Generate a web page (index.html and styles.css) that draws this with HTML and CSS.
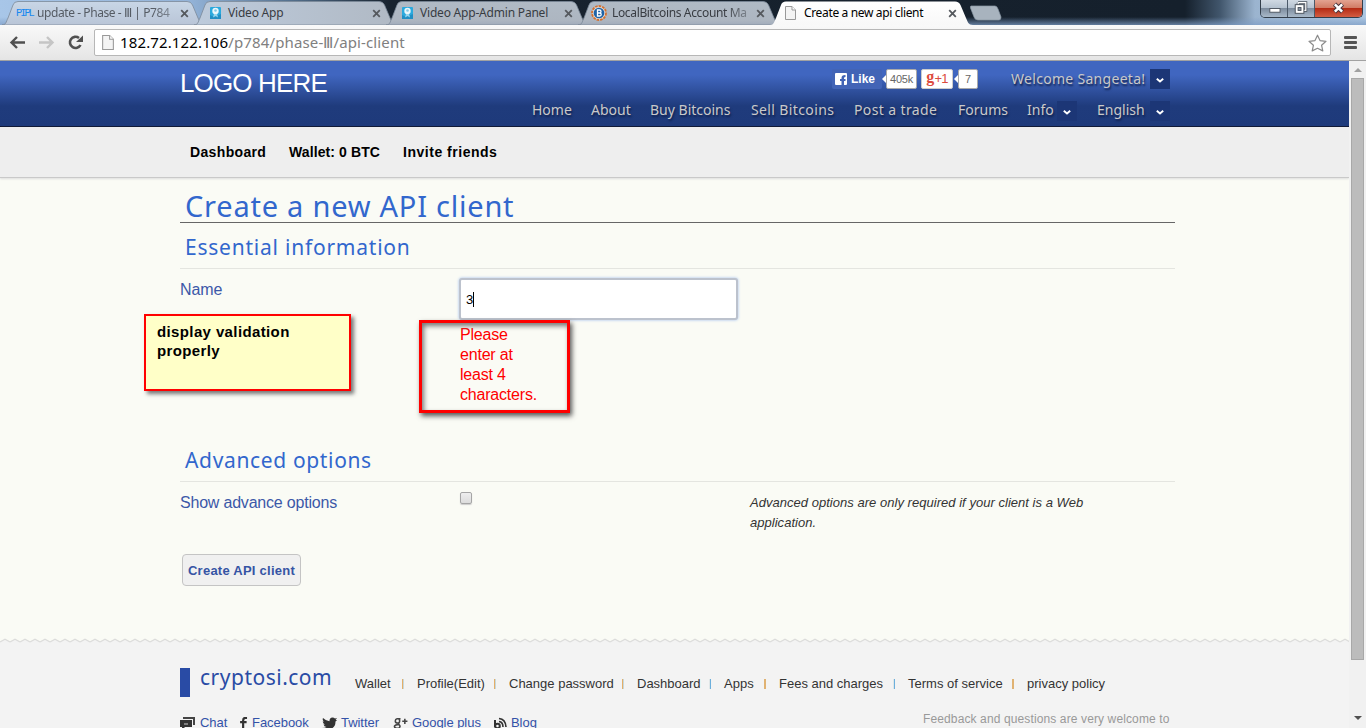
FILE: index.html
```html
<!DOCTYPE html>
<html lang="en">
<head>
<meta charset="utf-8">
<title>Create a new api client</title>
<link rel="stylesheet" href="styles.css">
</head>
<body>
<svg class="defs" width="0" height="0" aria-hidden="true">
  <defs>
    <linearGradient id="tabFill" x1="0" y1="0" x2="0" y2="1"><stop offset="0" stop-color="#b0bac5"/><stop offset=".8" stop-color="#adb6c1"/><stop offset="1" stop-color="#a1acbb"/></linearGradient>
    <linearGradient id="tabLight" x1="0" y1="0" x2="0" y2="1"><stop offset="0" stop-color="#c8d6e6"/><stop offset="1" stop-color="#b9c5d7"/></linearGradient>
    <linearGradient id="tabMix" x1="0" y1="0" x2="1" y2="0"><stop offset="0" stop-color="#bdcbdc"/><stop offset="1" stop-color="#b0b9c4"/></linearGradient>
    <linearGradient id="tabActive" x1="0" y1="0" x2="0" y2="1"><stop offset="0" stop-color="#fff"/><stop offset="1" stop-color="#f8f8f8"/></linearGradient>
    <symbol id="tabShape" viewBox="0 0 203 24"><path d="M0 24C4 24 4 21 6 17L11 4Q12 .5 16 .5H185Q189 .5 190.500 4L196 17C198 21 198 24 203 24Z"/></symbol>
    <symbol id="close" viewBox="0 0 9 9"><path d="M1.200 1.200 7.800 7.800M7.800 1.200 1.200 7.800" fill="none" stroke="#55595e" stroke-width="1.800"/></symbol>
    <symbol id="page" viewBox="0 0 11 14"><path d="M.5.5H7L10.500 4V13.500H.5Z" fill="#f4f4f4" stroke="#999"/><path d="M7 .5V4H10.500" fill="#fff" stroke="#999"/></symbol>
    <symbol id="video" viewBox="0 0 11 14"><rect y="1" width="11" height="12" rx="1" fill="#2ba9dd"/><path d="M0 9 4 11 11 8V13H0Z" fill="#218fc4"/><circle cx="5.500" cy="5" r="3.200" fill="#e9f7fc"/><circle cx="5.500" cy="4.500" r="1.300" fill="#84c8e4"/><path d="M4 8H7L8 11.500 5.500 10 3 11.500Z" fill="#9bd6ed"/></symbol>
    <symbol id="chev" viewBox="0 0 8 5"><path d="M.8.8 4 3.500 7.200.8" fill="none" stroke="#fff" stroke-width="1.900"/></symbol>
    <pattern id="zig" width="10" height="6" patternUnits="userSpaceOnUse"><path d="M0 4 5 1 10 4V6H0Z" fill="#f3f3f3"/><path d="M0 4 5 1.200 10 4" fill="none" stroke="#dcdcdb" stroke-width="1.200"/></pattern>
  </defs>
</svg>
<div class="browser">
  <div class="tabstrip">
    <div class="tab"><svg class="shape light"><use href="#tabShape"/></svg><span class="fav pipl">PIPL</span><span class="title t1">update - Phase - Ⅲ | P784</span><svg class="x"><use href="#close"/></svg></div>
    <div class="tab"><svg class="shape mix"><use href="#tabShape"/></svg><svg class="fav ico vid"><use href="#video"/></svg><span class="title t2">Video App</span><svg class="x"><use href="#close"/></svg></div>
    <div class="tab"><svg class="shape"><use href="#tabShape"/></svg><svg class="fav ico vid"><use href="#video"/></svg><span class="title t3">Video App-Admin Panel</span><svg class="x"><use href="#close"/></svg></div>
    <div class="tab"><svg class="shape"><use href="#tabShape"/></svg><svg class="fav coin" viewBox="0 0 16 16"><circle cx="8" cy="8" r="7" fill="#e0d7cf" stroke="#d4702f" stroke-width="1.800" stroke-dasharray="2.600 1"/><circle cx="8" cy="8" r="5.300" fill="#1f64a8"/><path d="M6.500 5H8.500Q10 5 10 6.500T8.500 8H6.500ZM6.500 8H8.800Q10.200 8 10.200 9.500T8.800 11H6.500Z" fill="none" stroke="#fff" stroke-width="1.300"/></svg><span class="title t4">LocalBitcoins Account Ma</span><svg class="x"><use href="#close"/></svg></div>
    <div class="tab current"><svg class="shape active"><use href="#tabShape"/></svg><svg class="fav ico"><use href="#page"/></svg><span class="title t5">Create a new api client</span><svg class="x"><use href="#close"/></svg></div>
    <svg class="newtab" viewBox="0 0 32 16"><path d="M1 1H25Q27 1 28 4L31 12Q31 15 29 15H8Q5 15 4 12L.5 3Q0 1 1 1Z" fill="#a8b3be" stroke="#8998a5" stroke-width=".7"/></svg>
    <div class="winbtns">
      <span class="wb"><svg viewBox="0 0 28 17"><rect x="9.500" y="8.500" width="11" height="4" fill="#fff" stroke="#4b535e"/></svg></span>
      <span class="wb"><svg viewBox="0 0 27 17"><path d="M10.500 2.500H18.500V10.500H16M10.500 2.500V5" fill="none" stroke="#4b535e" stroke-width="3"/><path d="M10.500 2.500H18.500V10.500H16M10.500 2.500V5" fill="none" stroke="#fff" stroke-width="1.300"/><rect x="7.500" y="4.500" width="9" height="9" fill="#fff" stroke="#4b535e"/><rect x="10.500" y="7.500" width="3" height="3" fill="#8996a6" stroke="#4b535e"/></svg></span>
      <span class="wb red"><svg viewBox="0 0 48 17"><path d="M20 4 28 12M28 4 20 12" stroke="#4c3840" stroke-width="4.600"/><path d="M20.300 4.300 27.700 11.700M27.700 4.300 20.300 11.700" stroke="#fff" stroke-width="2.600"/></svg></span>
    </div>
  </div>
  <div class="toolbar">
    <svg class="tools" viewBox="0 0 84 20" fill="none">
      <path d="M25 9.500H11M17 4 11.500 9.500 17 15" stroke="#505050" stroke-width="2.400"/>
      <path d="M39 9.500H52M47 4 52.500 9.500 47 15" stroke="#c5c5c5" stroke-width="2.400"/>
      <path d="M80.500 12A5.600 5.600 0 1 1 79 5" stroke="#505050" stroke-width="2.600"/><path d="M83 2.500V9H76Z" fill="#505050"/>
    </svg>
    <div class="omnibox">
      <svg class="pg"><use href="#page"/></svg>
      <span class="url"><b>182.72.122.106</b>/p784/phase-Ⅲ/api-client</span>
      <svg class="star" viewBox="0 0 19 18"><path d="M9.500 1.200 12 6.600 18 7.300 13.600 11.300 14.800 16.900 9.500 14.300 4.200 16.900 5.400 11.300 1 7.300 7 6.600Z" fill="#fff" stroke="#8b8b8b" stroke-width="1.200" stroke-linejoin="round"/></svg>
    </div>
    <div class="burger"><i></i><i></i><i></i></div>
  </div>
</div>
<div class="viewport">
  <div class="site">
    <header class="head">
      <div class="wrap headgrid">
        <div class="logo">LOGO HERE</div>
        <div class="social">
          <span class="like"><svg viewBox="0 0 12 12"><path d="M0 1Q0 0 1 0H11Q12 0 12 1V11Q12 12 11 12H9V8H10.500V6H9V5Q9 4 10.500 4V2Q6.500 1.800 6.500 5V6H5V8H6.500V12H1Q0 12 0 11Z" fill="#fff"/></svg>Like</span>
          <span class="bubble b1">405k</span>
          <span class="plus"><b>g</b><span>+1</span></span>
          <span class="bubble b2">7</span>
          <span class="welcome">Welcome Sangeeta!</span>
          <span class="drop"><svg><use href="#chev"/></svg></span>
        </div>
        <nav class="nav">
          <span>Home</span><span>About</span><span>Buy Bitcoins</span><span class="wide">Sell Bitcoins</span><span class="wide">Post a trade</span><span>Forums</span>
          <span class="dd"><span>Info</span><i class="drop"><svg><use href="#chev"/></svg></i></span><span class="dd"><span>English</span><i class="drop"><svg><use href="#chev"/></svg></i></span>
        </nav>
      </div>
    </header>
    <div class="sub"><div class="wrap subnav"><span class="s1">Dashboard</span><span class="s2">Wallet: 0 BTC</span><span class="s3">Invite friends</span></div></div>
    <main class="wrap main">
      <h1>Create a new API client</h1>
      <h2>Essential information</h2>
      <div class="row name">
        <span class="lab l1">Name</span>
        <div><div class="input">3<i></i></div><p class="err">Please<br>enter at<br>least 4<br>characters.</p></div>
      </div>
      <h2 class="adv">Advanced options</h2>
      <div class="row opt">
        <span class="lab l2">Show advance options</span><span class="check"></span>
        <p class="hint"><span>Advanced options are only required if your client is a Web</span><br>application.</p>
      </div>
      <div class="btn">Create API client</div>
      <div class="note"><span>display validation</span><br>properly</div>
      <div class="mark"></div>
    </main>
    <svg class="zigzag" width="1349" height="6"><rect width="1349" height="6" fill="url(#zig)"/></svg>
    <footer class="foot">
      <div class="wrap">
        <div class="f1">
          <span class="brand">cryptosi.com</span>
          <div class="links"><span>Wallet</span><span>Profile(Edit)</span><span>Change password</span><span>Dashboard</span><span class="blue">Apps</span><span>Fees and charges</span><span class="blue">Terms of service</span><span class="last">privacy policy</span></div>
        </div>
        <div class="f2">
          <span class="soc"><svg viewBox="0 0 15 13"><path d="M3 0H15V8H13V2H3Z" fill="#444"/><path d="M0 3H12V10H5L2 13V10H0Z" fill="#333"/><path d="M4 7H8" stroke="#ccc"/></svg>Chat</span>
          <span class="soc"><svg viewBox="0 0 9 15"><path d="M8 1H6Q3.500 1 3.500 4V14M0 6H7.500" fill="none" stroke="#333" stroke-width="2.500"/></svg>Facebook</span>
          <span class="soc"><svg viewBox="0 0 15 13"><path d="M1 1Q4 4 7.500 4.200Q7.300.8 10.500.5Q12 .5 13 1.500L15 1 13.600 3 15 3Q14 4 13.500 4.500Q13.500 12 5.500 12.500Q2 12.500 0 11Q3 11 4.500 10Q2 9.500 1.500 7.500H3Q.8 6.500.7 4.300L2 4.700Q0 3 1 1Z" fill="#333"/></svg>Twitter</span>
          <span class="soc"><svg viewBox="0 0 16 15" fill="none" stroke="#444" stroke-width="1.800"><path d="M8 2H4Q2 2.300 2 4.500T4.500 7T7 4.500T5 2M5 7 6.500 9Q8 10.500 7 12T3.500 13T1 11T4 9H6M10 5H16M13 2V8"/></svg>Google plus</span>
          <span class="soc"><svg viewBox="0 0 13 13" fill="none" stroke="#333"><path d="M1 3V10" stroke-width="2"/><circle cx="3.500" cy="9" r="2.300" stroke-width="2"/><path d="M5 4.500Q9 5 9 10M5 1.500Q11.500 2 12 10" stroke-width="1.600"/></svg>Blog</span>
          <span class="feedback">Feedback and questions are very welcome to</span>
        </div>
      </div>
    </footer>
  </div>
  <div class="scroll"><i class="up"></i><div class="thumb"></div><i class="down"></i></div>
</div>
</body>
</html>
```
FILE: styles.css
```css
*{box-sizing:border-box}
body{margin:0;width:1366px;height:728px;overflow:hidden;font-family:"Liberation Sans",sans-serif;background:#fafbf5;white-space:nowrap}
svg{display:block}
.defs{position:absolute}
h1,h2,p{margin:0;font-weight:400}
i{font-style:normal}
.tabstrip{height:25px;display:flex;position:relative;padding:1px 0 0 2px;background:linear-gradient(transparent 17px,rgba(126,157,197,.75) 25px),linear-gradient(90deg,#a8c6e8 0,#93b3d8 190px,#54708d 290px,#18232f 390px,#15202c 1185px,#41566c 1220px,#9bb4cf 1255px,#adc7e2)}
.tab{position:relative;width:203px;margin-right:-11px;height:24px;display:flex;align-items:center;padding-left:15px;flex:none}
.current{z-index:1}
.shape{position:absolute;inset:0;width:203px;height:24px;fill:url(#tabFill);stroke:#7b8998;stroke-width:.8}
.light{fill:url(#tabLight)}.mix{fill:url(#tabMix)}.active{fill:url(#tabActive);stroke:none}
.fav{position:relative;width:20px;flex:none}
.ico{width:11px;height:14px;margin-right:7px}
.vid{margin-left:1px;margin-right:6px}
.coin{width:16px;height:16px;margin:0 4px 0 -2px}
.pipl{font:10.500px/14px "Liberation Mono",monospace;color:#1688ef;margin-left:-1px;letter-spacing:-2.100px}
.title{position:relative;font:12px/18px "Noto Sans",sans-serif;color:#383c42;width:140px;margin-left:1px}
.t1{color:#555b64;letter-spacing:-.42px;-webkit-mask-image:linear-gradient(90deg,#000 115px,rgba(0,0,0,.5) 138px);mask-image:linear-gradient(90deg,#000 115px,rgba(0,0,0,.5) 138px)}
.t2,.t3{letter-spacing:-.2px}
.t4{letter-spacing:-.35px;-webkit-mask-image:linear-gradient(90deg,#000 112px,rgba(0,0,0,.25) 142px);mask-image:linear-gradient(90deg,#000 112px,rgba(0,0,0,.25) 142px)}
.t5{color:#000;letter-spacing:-.35px}
.x{position:absolute;left:178px;top:8px;width:9px;height:9px}
.newtab{width:32px;height:16px;margin:4px 0 0 8px}
.winbtns{display:flex;margin-left:auto;margin-right:3px;width:103px;height:18px;border:1px solid #333e4b;border-top:0;border-radius:0 0 5px 5px;overflow:hidden;margin-top:-1px}
.wb{width:27px;background:linear-gradient(#d0d9e3 0,#b4c1cf 48%,#7d8c9e 50%,#a9b9c9);border-right:1px solid #4b5969}
.wb svg{width:100%;height:17px}
.red{width:47px;border:0;background:linear-gradient(#e3a391 0,#d07a63 48%,#b52c15 50%,#d35d42)}
.toolbar{height:36px;display:flex;padding-top:4px;background:linear-gradient(#f9f9f9,#e5e5e5);border-bottom:1px solid #a2a2a2}
.tools{width:84px;height:20px;margin:4px 10px 0 0}
.omnibox{width:1237px;height:27px;border:1px solid #b7b7b7;border-radius:2px;background:#fff;display:flex;align-items:center;padding-left:7px}
.pg{width:12px;height:15px}
.url{font:15px/22px "Noto Sans",sans-serif;color:#808080;margin:-2px 0 0 6px;letter-spacing:.13px}
.url b{font-weight:400;color:#000}
.star{width:19px;height:18px;margin-left:auto;margin-right:3px}
.burger{margin:7px 0 0 13px;width:13px;display:grid;gap:2px;align-content:start}
.burger i{height:3px;background:#555;border-radius:1px}
.viewport{display:flex;height:667px}
.site{width:1349px;overflow:hidden;height:667px}
.wrap{width:995px;margin-left:180px}
.head{height:66px;background:linear-gradient(#4066c0 0,#4066c0 14px,#1f3b7c 45px,#1e3a7b);border-bottom:1px solid #020b2b}
.headgrid{display:grid;grid-template-columns:352px 638px;grid-template-rows:35px 30px}
.logo{grid-row:1/3;color:#fff;font-size:26px;line-height:30px;padding-top:7px;letter-spacing:-.85px}
.social{display:flex;padding:8px 0 0 300px;height:35px}
.like{width:50px;height:20px;display:flex;align-items:center;font:bold 12px/20px "Liberation Sans",sans-serif;color:#fff;background:#4264b6;padding-left:3px;border-radius:2px}
.like svg{width:12px;height:12px;margin-right:4px}
.bubble{position:relative;height:20px;background:#fff;border:1px solid #aaa;border-radius:2px;color:#666;font-size:11px;line-height:18px;text-align:center}
.bubble:before{content:"";position:absolute;left:-5px;top:5px;border:4px solid transparent;border-right-color:#fff;border-left:0}
.b1{width:31px;margin-left:4px;letter-spacing:-.2px}.b2{width:20px;margin-left:5px}
.plus{width:32px;height:20px;margin-left:4px;background:#fff;border:1px solid #ccc;border-radius:2px;color:#dc4b3e;font:13px/17px "Liberation Sans",sans-serif;display:flex;justify-content:center;letter-spacing:-.8px}
.plus b{font:bold 16px/14px "Liberation Serif",serif;margin-right:1px}
.welcome,.nav{font:14px/20px "Noto Sans",sans-serif;color:#c9c9c9;text-shadow:1px 2px 2px #10204c}
.welcome{margin-left:33px;width:139px;letter-spacing:.3px}
.drop{width:20px;height:20px;background:#1c3676;display:flex;align-items:center;justify-content:center;flex:none}
.drop svg{width:8px;height:5px;margin-top:2px}
.nav{display:grid;grid-template-columns:39px 39px 81px 83px 84px 49px 50px 73px;column-gap:20px;padding-top:4px}
.nav .wide{letter-spacing:.38px}
.dd{display:flex;justify-content:space-between}
.dd .drop{margin-top:1px}
.sub{height:51px;background:#eee;border-bottom:1px solid #c9c9c9;box-shadow:0 1px 2px #ddd}
.subnav{display:grid;grid-template-columns:99px 114px 100px;padding:15px 0 0 10px;font:bold 14px/20px "Liberation Sans",sans-serif}
.s1{letter-spacing:.35px}.s2{letter-spacing:.1px}.s3{letter-spacing:.52px}
.main{position:relative;height:460px;padding-top:12px;font-size:16px}
h1,h2,.brand{font-family:"Noto Sans",sans-serif;color:#3267cd}
h1{font-size:29px;line-height:31px;height:33px;padding-left:5px;border-bottom:1px solid #666;letter-spacing:.77px}
h2{font-size:21px;line-height:28px;height:46px;padding:10px 0 0 5px;border-bottom:1px solid #e4e5e0;letter-spacing:.77px}
.adv{letter-spacing:.65px}
.row{display:grid;grid-template-columns:280px 290px 1fr;color:#3c58a8}
.name{height:167px;padding-top:9px}
.lab{line-height:24px;letter-spacing:-.2px}
.l1{letter-spacing:-.1px}
.input{width:279px;height:42px;margin-left:-1px;border:2px solid #bcc2cd;border-radius:3px;background:#fff;box-shadow:0 0 3px #9dbbee;display:flex;align-items:center;padding-left:5px;font-size:13px;color:#000}
.input i{width:1px;height:15px;background:#000}
.err{color:#f00;line-height:20px;padding-top:5px;letter-spacing:-.2px}
.opt{height:72px;padding-top:9px}
.check{width:12px;height:12px;margin-top:1px;border:1px solid #a5a5a5;border-radius:2px;background:linear-gradient(#eee,#dcdcdc);box-shadow:0 1px 1px #ccc}
.hint{font:italic 13px/20px "Liberation Sans",sans-serif;color:#333;padding-top:2px;letter-spacing:.03px}
.btn{margin:0 0 0 2px;width:119px;height:32px;border:1px solid #c4c4c4;border-radius:4px;background:#f0f0f0;font:bold 13px/31px "Liberation Sans",sans-serif;color:#3654a4;text-align:center;letter-spacing:.25px}
.note{position:absolute;left:-36px;top:136px;width:207px;height:77px;border:2px solid #f00;background:#ffffc8;box-shadow:3px 3px 4px #777;padding:6px 11px;font:bold 15px/19px "Liberation Sans",sans-serif;letter-spacing:.38px}
.mark{position:absolute;left:239px;top:142px;width:151px;height:93px;border:3px solid #f00;box-shadow:2px 3px 5px #555,inset 2px 3px 5px #777}
.zigzag{height:6px}
.foot{height:84px;background:#f3f3f3;padding-top:24px}
.f1{display:flex;height:29px;border-left:10px solid #294ba5}
.brand{font-size:21px;line-height:19px;color:#294ba5;padding-left:10px;width:165px;letter-spacing:.5px}
.links{display:grid;grid-template-columns:62px 92px 128px 87px 55px 129px 119px 78px;font-size:13px;color:#333;padding-top:6px;line-height:20px}
.links span{display:flex;justify-content:space-between;padding-right:13px}
.links span:after{content:"";width:2px;height:10px;background:linear-gradient(90deg,#e4ae68 60%,#c6d8dc 60%);margin-top:5px}
.links .blue:after{background:#e0b272}
.links span:nth-child(4):after,.links span:nth-child(6):after{background:linear-gradient(90deg,#dfe6e7 40%,#6cafdc 40%)}
.links .last{padding:0}.links .last:after{display:none}
.f2{display:grid;grid-template-columns:60px 82px 71px 101px 429px 247px;font-size:13px;line-height:20px;color:#3352a8;padding-top:16px;letter-spacing:-.05px}
.soc{display:flex}
.soc svg{height:13px;width:15px;margin:4px 5px 0 0}
.soc:nth-child(2) svg{width:8px;margin-right:4px}
.soc:nth-child(3) svg,.soc:nth-child(4) svg{margin-right:4px}
.soc:nth-child(5) svg{width:13px;margin-right:4px}
.feedback{color:#999;font-size:12px;line-height:14px;margin-top:-1px;letter-spacing:.12px}
.scroll{width:17px;background:#f1f1f1;display:flex;flex-direction:column;align-items:center;height:667px}
.up,.down{border:4px solid transparent}
.up{border-top:0;border-bottom-color:#a0a0a0;margin-top:7px}
.thumb{width:13px;height:582px;margin-top:6px;border:1px solid #a8a8a8;background:#bcbcbc}
.down{border-bottom:0;border-top-color:#505050;margin-top:56px}
```
